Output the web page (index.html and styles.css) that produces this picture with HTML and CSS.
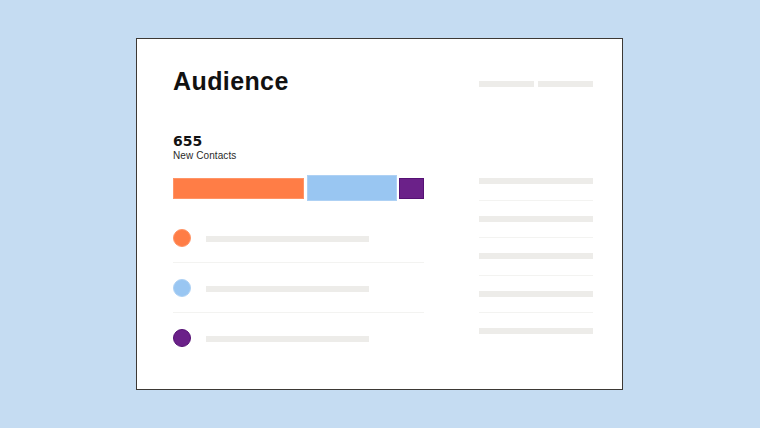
FILE: index.html
```html
<!DOCTYPE html>
<html lang="en">
<head>
<meta charset="utf-8">
<title>Audience</title>
<link rel="stylesheet" href="styles.css">
</head>
<body>
  <div class="card">
    <div class="header">
      <h1 class="title">Audience</h1>
      <div class="tabs">
        <span class="tab"></span>
        <span class="tab"></span>
      </div>
    </div>
    <div class="body">
      <div class="main">
        <div class="count">655</div>
        <div class="label">New Contacts</div>
        <div class="bar">
          <span class="seg seg-orange"></span>
          <span class="seg seg-blue"></span>
          <span class="seg seg-purple"></span>
        </div>
        <ul class="legend">
          <li class="legend-row"><span class="dot dot-orange"></span><span class="legend-line"></span></li>
          <li class="legend-row"><span class="dot dot-blue"></span><span class="legend-line"></span></li>
          <li class="legend-row"><span class="dot dot-purple"></span><span class="legend-line"></span></li>
        </ul>
      </div>
      <ul class="side">
        <li class="side-row"><span class="side-line"></span></li>
        <li class="side-row"><span class="side-line"></span></li>
        <li class="side-row"><span class="side-line"></span></li>
        <li class="side-row"><span class="side-line"></span></li>
        <li class="side-row"><span class="side-line"></span></li>
      </ul>
    </div>
  </div>
</body>
</html>
```

FILE: styles.css
```css
* { box-sizing: border-box; }

html, body {
  margin: 0;
  padding: 0;
}

body {
  width: 760px;
  height: 428px;
  background: #c5dcf2;
  padding: 38px 0 0 136px;
  font-family: "Liberation Sans", Arial, sans-serif;
  color: #111;
  overflow: hidden;
}

.card {
  width: 487px;
  height: 352px;
  background: #fff;
  border: 1px solid #3d3935;
  padding: 27px 29px 0 36px;
}

.header {
  display: flex;
  justify-content: space-between;
  align-items: flex-start;
}

.title {
  margin: 0;
  font-size: 25px;
  line-height: 30px;
  font-weight: 700;
  letter-spacing: 0.4px;
}

.tabs {
  display: flex;
  gap: 4px;
  margin-top: 15px;
}

.tab {
  display: block;
  width: 55px;
  height: 6px;
  background: #edece9;
}

.body {
  display: grid;
  grid-template-columns: 251px 114px;
  column-gap: 55px;
  margin-top: 36px;
}

.count {
  font-family: "DejaVu Sans", sans-serif;
  font-size: 14px;
  line-height: 18px;
  font-weight: 700;
}

.label {
  font-size: 10px;
  line-height: 12px;
  color: #2a2a2a;
  letter-spacing: 0.1px;
}

.bar {
  display: flex;
  align-items: center;
  height: 26px;
  margin-top: 13px;
}

.seg {
  display: block;
  height: 21px;
  border: 1px solid transparent;
}

.seg-orange {
  width: 131px;
  background: #ff7d46;
  border-color: #ff9466;
}

.seg-blue {
  width: 90px;
  height: 26px;
  margin-left: 3px;
  background: #99c6f2;
  border-color: #aed1f4;
}

.seg-purple {
  width: 25px;
  margin-left: 2px;
  background: #6b2189;
  border-color: #561174;
}

.legend {
  list-style: none;
  margin: 12px 0 0;
  padding: 0;
}

.legend-row {
  display: flex;
  align-items: center;
  padding: 16px 0 15px;
  border-bottom: 1px solid #f3f3f1;
}

.legend-row:last-child {
  border-bottom: none;
}

.dot {
  display: block;
  width: 18px;
  height: 18px;
  border-radius: 50%;
  border: 1px solid transparent;
}

.dot-orange { background: #ff7d46; border-color: #ff9466; }
.dot-blue { background: #99c6f2; border-color: #aed1f4; }
.dot-purple { background: #6b2189; border-color: #561174; }

.legend-line {
  display: block;
  width: 163px;
  height: 6px;
  margin-left: 15px;
  margin-top: 2px;
  background: #edece9;
}

.side {
  list-style: none;
  margin: 0;
  padding: 31px 0 0;
}

.side-row {
  padding: 15px 0 15.5px;
  border-bottom: 1px solid #f3f3f1;
}

.side-row:last-child {
  border-bottom: none;
}

.side-line {
  display: block;
  height: 6px;
  background: #edece9;
}
```
